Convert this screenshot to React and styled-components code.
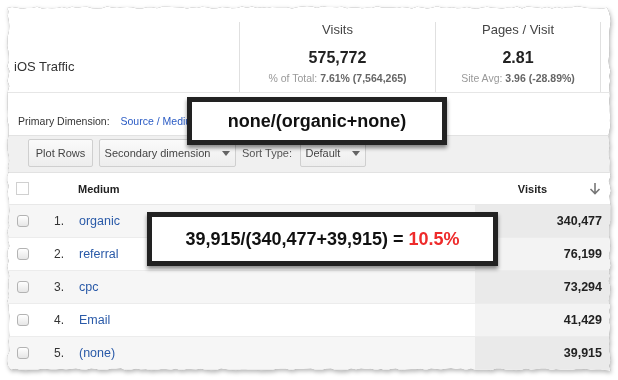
import React from "react";
import styled, { createGlobalStyle } from "styled-components";

const W = 604;
const H = 365;

function makeEdge() {
  let s = 12345;
  const rnd = () => {
    s = (s * 1103515245 + 12345) % 2147483648;
    return s / 2147483648;
  };
  const pts = [];
  const step = 5;
  for (let x = 0; x <= W; x += step) pts.push([x, 0.3 + rnd() * 2.4]);
  for (let y = step; y <= H; y += step) pts.push([W - 0.3 - rnd() * 2.4, y]);
  for (let x = W - step; x >= 0; x -= step) pts.push([x, H - 0.3 - rnd() * 2.4]);
  for (let y = H - step; y > 0; y -= step) pts.push([0.3 + rnd() * 2.4, y]);
  return "polygon(" + pts.map(([a, b]) => `${a.toFixed(1)}px ${b.toFixed(1)}px`).join(",") + ")";
}
const EDGE = makeEdge();

const GlobalStyle = createGlobalStyle`
  html, body { margin: 0; padding: 0; background: #fff; }
  body { font-family: "Liberation Sans", Arial, Helvetica, sans-serif; color: #333; }
  * { box-sizing: border-box; }
`;

const Stage = styled.div`
  padding: 6px 0 0 7px;
  width: 618px;
  height: 380px;
`;

const PaperShadow = styled.div`
  width: ${W}px;
  filter: drop-shadow(0 0 0.7px rgba(0, 0, 0, 0.45)) drop-shadow(1.5px 2px 2px rgba(0, 0, 0, 0.28));
`;

const Paper = styled.div`
  position: relative;
  width: ${W}px;
  height: ${H}px;
  background: #fff;
  overflow: hidden;
`;

const Header = styled.div`
  display: grid;
  grid-template-columns: 232px 196px 165px 1fr;
  height: 87px;
  padding-top: 16px;
  border-bottom: 1px solid #e6e6e6;
`;

const Title = styled.div`
  display: flex;
  align-items: flex-end;
  padding: 0 0 17px 7px;
  font-size: 13px;
  line-height: 16px;
  color: #333;
`;

const Metric = styled.div`
  border-left: 1px solid #e0e0e0;
  text-align: center;
`;

const MetricLabel = styled.div`
  font-size: 13px;
  line-height: 16px;
  color: #444;
`;

const MetricValue = styled.div`
  margin-top: 10px;
  font-size: 16px;
  line-height: 20px;
  font-weight: bold;
  color: #222;
`;

const MetricSub = styled.div`
  margin-top: 4px;
  font-size: 10.5px;
  line-height: 12px;
  color: #999;
  b { color: #666; }
`;

const PrimaryRow = styled.div`
  height: 42px;
  padding: 22px 0 0 11px;
  font-size: 10.5px;
  line-height: 13px;
  color: #333;
`;

const Link = styled.span`
  color: #2a5bc4;
  margin-left: ${(p) => p.$ml || 0}px;
`;

const Toolbar = styled.div`
  display: flex;
  align-items: flex-start;
  gap: 6px;
  height: 38px;
  padding: 3px 0 0 21px;
  background: #f0f0f0;
  border-top: 1px solid #e2e2e2;
  border-bottom: 1px solid #e2e2e2;
`;

const Button = styled.div`
  display: flex;
  align-items: center;
  justify-content: center;
  gap: 12px;
  width: ${(p) => p.$w}px;
  height: 28px;
  border: 1px solid #cfcfcf;
  border-radius: 2px;
  background: linear-gradient(#fafafa, #ededed);
  font-size: 11px;
  color: #444;
`;

const Caret = styled.span`
  width: 0;
  height: 0;
  border-left: 4px solid transparent;
  border-right: 4px solid transparent;
  border-top: 5px solid #666;
`;

const ToolLabel = styled.div`
  height: 28px;
  display: flex;
  align-items: center;
  font-size: 11px;
  color: #555;
  margin-right: 2px;
`;

const Row = styled.div`
  display: grid;
  grid-template-columns: 32px 25px 411px 136px;
  height: ${(p) => (p.$head ? 32 : 33)}px;
  align-items: stretch;
  background: ${(p) => (p.$head ? "#fff" : p.$odd ? "#f6f6f6" : "#fff")};
  border-bottom: 1px solid ${(p) => (p.$head ? "#e8e8e8" : "#ececec")};
`;

const Cell = styled.div`
  display: flex;
  align-items: center;
  justify-content: ${(p) => p.$justify || "flex-start"};
  padding-left: ${(p) => p.$pl || 0}px;
  padding-right: ${(p) => p.$pr || 0}px;
  background: ${(p) => p.$bg || "transparent"};
  gap: ${(p) => p.$gap || 0}px;
`;

const HeadBox = styled.span`
  width: 13px;
  height: 13px;
  border: 1px solid #d0d0d0;
  background: #fff;
`;

const RowBox = styled.span`
  width: 12px;
  height: 12px;
  border: 1px solid #b3b3b3;
  border-radius: 3px;
  background: linear-gradient(#ffffff, #e6e6e6);
`;

const HeadText = styled.span`
  font-size: 11px;
  font-weight: bold;
  color: #222;
`;

const Num = styled.span`
  font-size: 12px;
  color: #333;
`;

const MediumLink = styled.span`
  font-size: 12.5px;
  color: #2a5aa8;
`;

const Value = styled.span`
  font-size: 12.5px;
  font-weight: bold;
  color: #222;
`;

const Callout = styled.div`
  position: absolute;
  left: ${(p) => p.$x}px;
  top: ${(p) => p.$y}px;
  width: ${(p) => p.$w}px;
  height: ${(p) => p.$h}px;
  border: 5px solid #222;
  background: #fff;
  box-shadow: 0 3px 4px rgba(0, 0, 0, 0.45);
  display: flex;
  align-items: center;
  justify-content: center;
  font-size: 18px;
  font-weight: bold;
  color: #111;
  white-space: nowrap;
`;

const Red = styled.span`
  color: #ee2b2b;
`;

const SortArrow = () => (
  <svg width="12" height="13" viewBox="0 0 12 13">
    <path d="M6 1 V11.5 M1.5 7 L6 11.5 L10.5 7" fill="none" stroke="#777" strokeWidth="1.6" />
  </svg>
);

const rows = [
  ["1.", "organic", "340,477"],
  ["2.", "referral", "76,199"],
  ["3.", "cpc", "73,294"],
  ["4.", "Email", "41,429"],
  ["5.", "(none)", "39,915"],
];

export default function App() {
  return (
    <Stage>
      <GlobalStyle />
      <PaperShadow>
        <Paper style={{ clipPath: EDGE }}>
          <Header>
            <Title>iOS Traffic</Title>
            <Metric>
              <MetricLabel>Visits</MetricLabel>
              <MetricValue>575,772</MetricValue>
              <MetricSub>
                % of Total: <b>7.61% (7,564,265)</b>
              </MetricSub>
            </Metric>
            <Metric>
              <MetricLabel>Pages / Visit</MetricLabel>
              <MetricValue>2.81</MetricValue>
              <MetricSub>
                Site Avg: <b>3.96 (-28.89%)</b>
              </MetricSub>
            </Metric>
            <Metric />
          </Header>
          <PrimaryRow>
            Primary Dimension: <Link $ml={8}>Source / Medium</Link>
          </PrimaryRow>
          <Toolbar>
            <Button $w={65}>Plot Rows</Button>
            <Button $w={137}>
              Secondary dimension <Caret />
            </Button>
            <ToolLabel>Sort Type:</ToolLabel>
            <Button $w={66}>
              Default <Caret />
            </Button>
          </Toolbar>
          <Row $head>
            <Cell $pl={9}>
              <HeadBox />
            </Cell>
            <Cell />
            <Cell $pl={14}>
              <HeadText>Medium</HeadText>
            </Cell>
            <Cell $justify="flex-end" $pr={10} $gap={42}>
              <HeadText>Visits</HeadText>
              <SortArrow />
            </Cell>
          </Row>
          {rows.map(([n, m, v], i) => (
            <Row key={n} $odd={i % 2 === 0}>
              <Cell $pl={10}>
                <RowBox />
              </Cell>
              <Cell $justify="flex-end">
                <Num>{n}</Num>
              </Cell>
              <Cell $pl={15}>
                <MediumLink>{m}</MediumLink>
              </Cell>
              <Cell $justify="flex-end" $pr={9} $bg={i % 2 === 0 ? "#eaeaea" : "#f3f3f3"}>
                <Value>{v}</Value>
              </Cell>
            </Row>
          ))}
          <Callout $x={180} $y={91} $w={260} $h={48}>
            none/(organic+none)
          </Callout>
          <Callout $x={140} $y={206} $w={351} $h={54}>
            <span>
              39,915/(340,477+39,915) = <Red>10.5%</Red>
            </span>
          </Callout>
        </Paper>
      </PaperShadow>
    </Stage>
  );
}
